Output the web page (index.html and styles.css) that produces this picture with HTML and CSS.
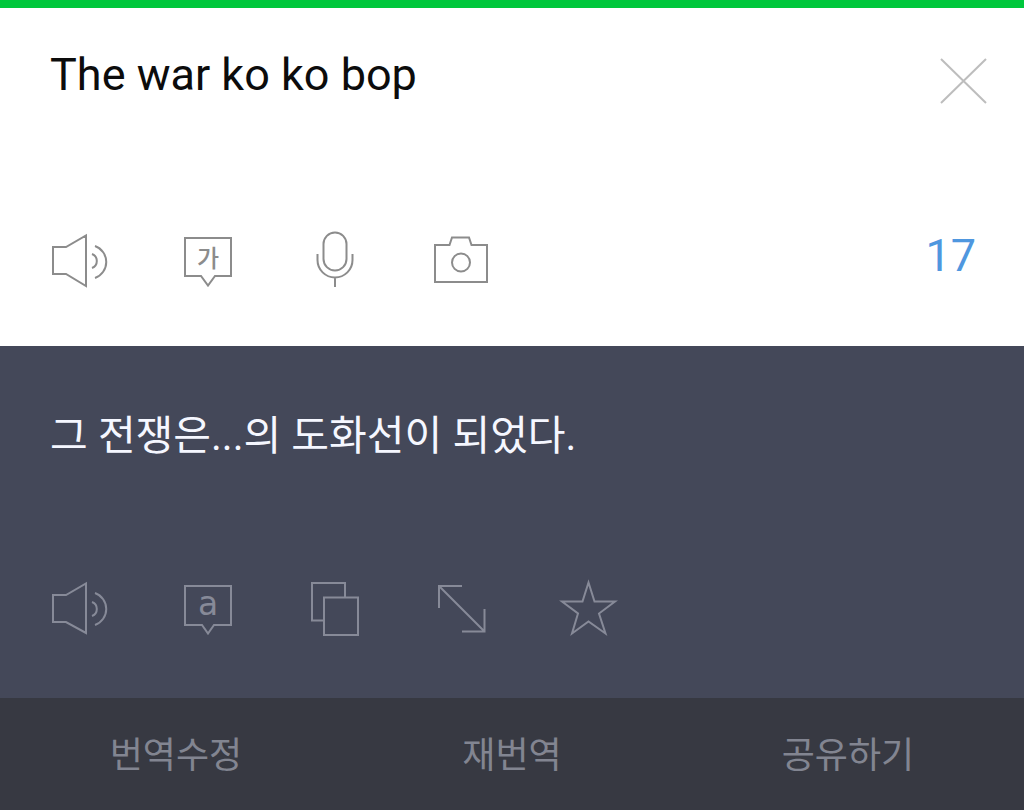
FILE: index.html
```html
<!DOCTYPE html>
<html lang="ko">
<head>
<meta charset="utf-8">
<meta name="viewport" content="width=device-width, initial-scale=1">
<title>번역</title>
<link rel="stylesheet" href="styles.css">
</head>
<body>
<main class="app">
  <section class="source">
    <div class="entry">
      <textarea class="entry-text" aria-label="원문" spellcheck="false">The war ko ko bop</textarea>
      <button class="clear" type="button" aria-label="지우기">
        <svg width="50" height="50" viewBox="0 0 50 50"><path d="M3 3 48 47M48 3 3 47"/></svg>
      </button>
    </div>
    <div class="tools">
      <button class="tool" type="button" aria-label="원문 듣기">
        <svg width="63" height="64" viewBox="0 0 63 64"><path d="M5 19H18L38 7.5V58L18 46H5ZM47 18A17 17 0 0 1 47 50M44 26A7.5 7.5 0 0 1 44 40"/></svg>
      </button>
      <button class="tool" type="button" aria-label="발음 보기">
        <svg width="63" height="64" viewBox="0 0 63 64"><path d="M10 10H56V48H40L33 57.5 26 48H10Z"/><text class="hangul" x="33" y="39">가</text></svg>
      </button>
      <button class="tool" type="button" aria-label="음성 입력">
        <svg width="63" height="64" viewBox="0 0 63 64"><rect x="21.5" y="4.5" width="23" height="38" rx="11.5"/><path d="M15.5 26V32A17.5 17.5 0 0 0 50.5 32V26M33 49.5V59"/></svg>
      </button>
      <button class="tool" type="button" aria-label="이미지 번역">
        <svg width="63" height="64" viewBox="0 0 63 64"><path d="M6 17H20.5L23 9.5H40L42.5 17H58V54H6Z"/><circle cx="32" cy="34.5" r="9"/></svg>
      </button>
      <output class="count" aria-label="글자 수">17</output>
    </div>
  </section>

  <section class="result">
    <p class="result-text">그 전쟁은...의 도화선이 되었다.</p>
    <div class="tools">
      <button class="tool" type="button" aria-label="번역 듣기">
        <svg width="63" height="64" viewBox="0 0 63 64"><path d="M5 19H18L38 7.5V57L18 46H5ZM47 17A17 17 0 0 1 47 49M44 26A7.5 7.5 0 0 1 44 40"/></svg>
      </button>
      <button class="tool" type="button" aria-label="로마자 보기">
        <svg width="63" height="64" viewBox="0 0 63 64"><path d="M10 10H56V49H39L33 57.5 27 49H10Z"/><text class="latin" x="33" y="39">a</text></svg>
      </button>
      <button class="tool" type="button" aria-label="복사">
        <svg width="63" height="64" viewBox="0 0 63 64"><path d="M22 44.5H10V7H43V21"/><path d="M22 21.5H56V59H22Z"/></svg>
      </button>
      <button class="tool" type="button" aria-label="크게 보기">
        <svg width="63" height="64" viewBox="0 0 63 64"><path d="M10 32V10H33M10 10 55.5 55.5M33 55.5H55.5V33"/></svg>
      </button>
      <button class="tool" type="button" aria-label="즐겨찾기">
        <svg width="63" height="64" viewBox="0 0 63 64"><path d="M32.500 6.5 38.5 25.5H59L43 37.5 49.5 57.5 32.5 45.5 16 57.5 22 37.5 6 25.5H26.5Z"/></svg>
      </button>
    </div>
  </section>

  <footer class="actions">
    <button class="action" type="button">번역수정</button>
    <button class="action" type="button">재번역</button>
    <button class="action" type="button">공유하기</button>
  </footer>
</main>
</body>
</html>
```
FILE: styles.css
```css
* {
  box-sizing: border-box;
}

body {
  margin: 0;
  font-family: Roboto, "Noto Sans CJK KR", sans-serif;
}

button {
  padding: 0;
  border: 0;
  background: none;
  color: inherit;
  font: inherit;
  cursor: pointer;
}

svg {
  display: block;
  fill: none;
  stroke: currentColor;
  stroke-width: 2;
}

.app {
  display: flex;
  flex-direction: column;
  min-height: 100vh;
}

.source {
  padding: 40px 0 54px;
  border-top: 8px solid #00c73c;
  background: #fff;
  color: #8c8c8c;
}

.entry {
  display: flex;
  align-items: flex-start;
  gap: 24px;
  margin-bottom: 24px;
  padding: 0 36px 0 50px;
}

.entry-text {
  flex: 1;
  min-width: 0;
  height: 156px;
  padding: 0;
  border: 0;
  outline: 0;
  resize: none;
  background: none;
  color: #0c0c0c;
  font: 45px/54px Roboto, "Noto Sans CJK KR", sans-serif;
}

.clear {
  padding-top: 8px;
  color: #bdbdbd;
}

.tools {
  display: flex;
  align-items: flex-start;
  padding: 0 48px 0 16px;
}

.tool {
  display: flex;
  flex: 0 1 127px;
  justify-content: center;
}

.tool text {
  fill: currentColor;
  stroke: none;
  text-anchor: middle;
}

.hangul {
  font: 500 24px "Noto Sans CJK KR", sans-serif;
}

.latin {
  font: 33px "DejaVu Sans", sans-serif;
}

.count {
  margin-left: auto;
  color: #4f97df;
  font-size: 45px;
  line-height: 56px;
}

.result {
  flex: 1;
  padding: 62px 0 58px;
  background: #444859;
  color: #878a98;
}

.result-text {
  margin: 0 0 112px;
  padding: 0 50px;
  color: #f5f7ff;
  font-size: 41px;
  line-height: 56px;
}

.actions {
  display: grid;
  grid-template-columns: 11fr 10fr 11fr;
  background: #373942;
  color: #828591;
}

.action {
  height: 112px;
  padding-top: 4px;
  font-size: 36px;
  line-height: 48px;
}
```
